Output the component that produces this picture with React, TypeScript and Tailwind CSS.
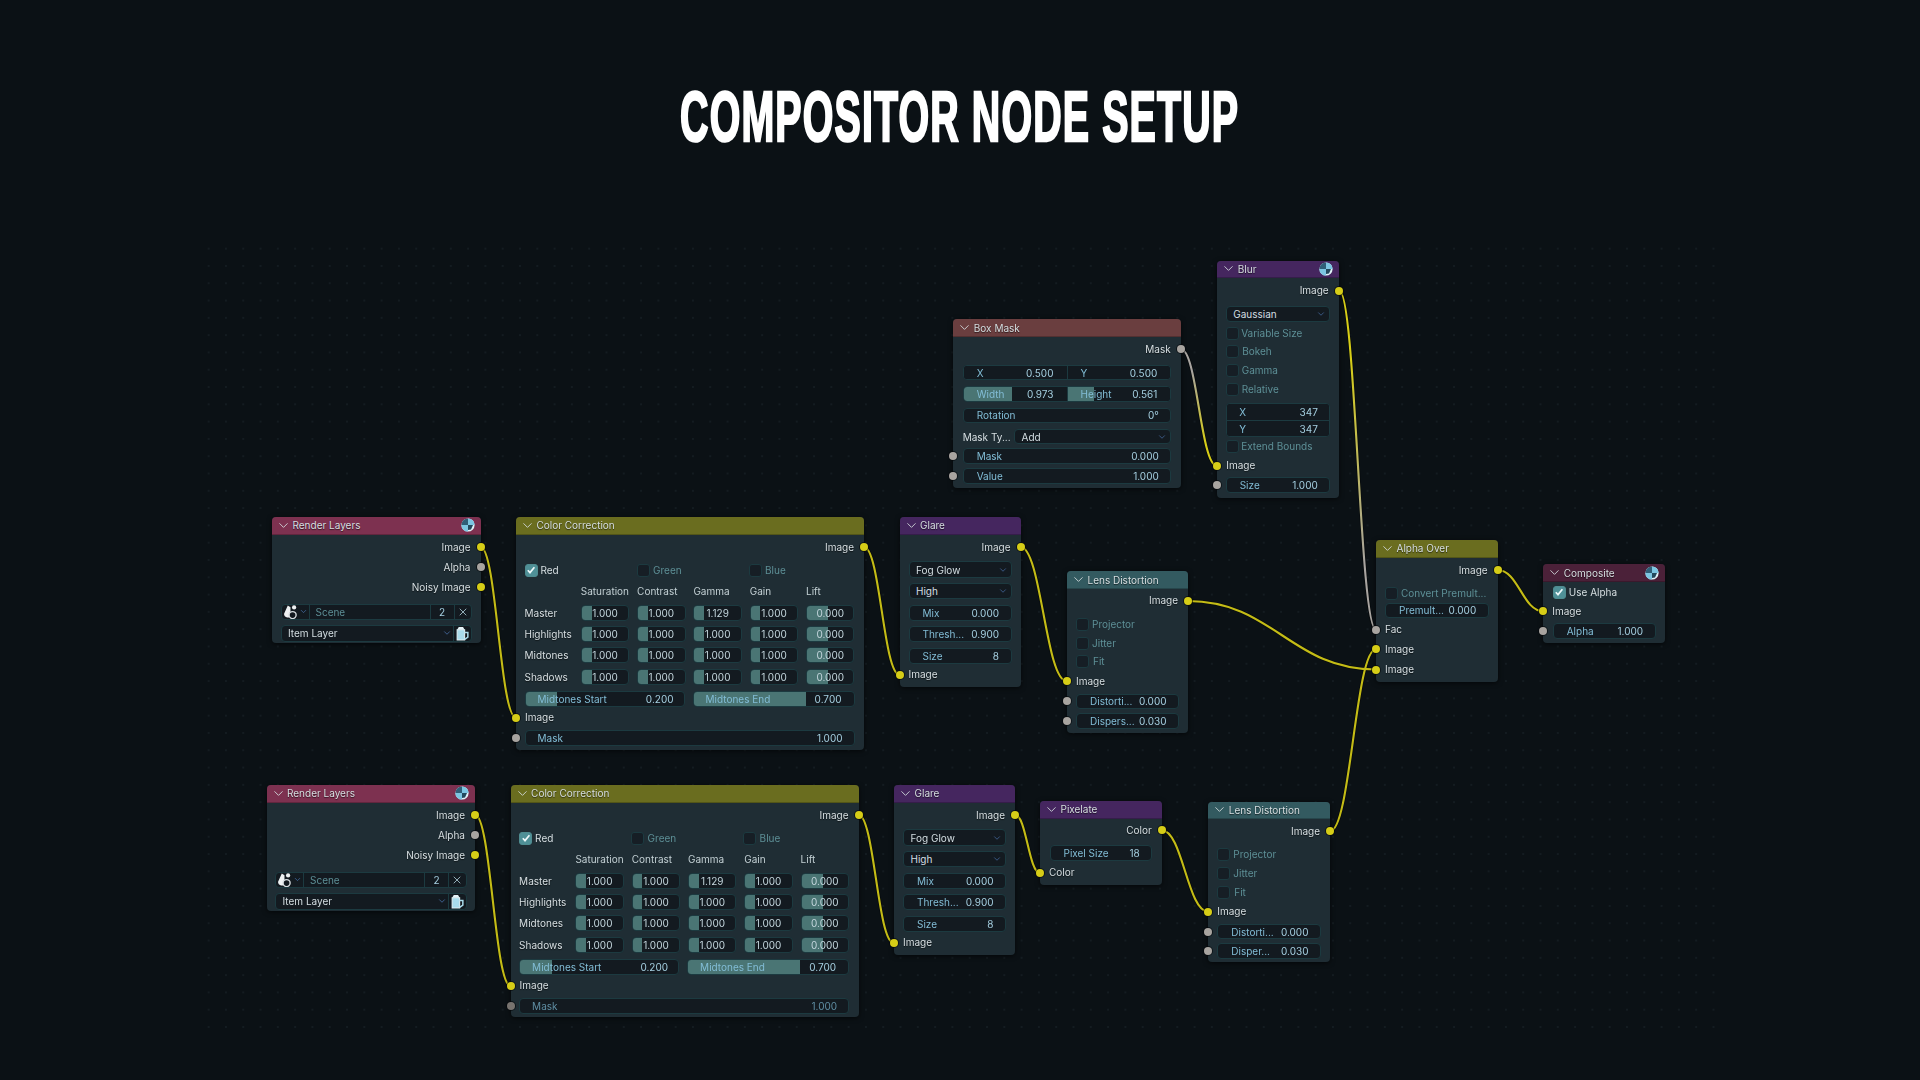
import type { ReactNode } from "react"
import { ChevronDown, X } from "lucide-react"

const YELLOW = "#d6cd17"
const GRAY = "#a8a4a0"

type Wire = { x1: number; y1: number; x2: number; y2: number; from?: string; to?: string }

const wires: Wire[] = [
  { x1: 480.5, y1: 547, x2: 516, y2: 717.7 },
  { x1: 864, y1: 547, x2: 899.5, y2: 674.7 },
  { x1: 1020.5, y1: 547, x2: 1066.5, y2: 681 },
  { x1: 1188, y1: 601, x2: 1376, y2: 669.5 },
  { x1: 1181, y1: 349.3, x2: 1216.7, y2: 465.7, from: GRAY, to: YELLOW },
  { x1: 1339.3, y1: 290.7, x2: 1376, y2: 629.7, from: YELLOW, to: GRAY },
  { x1: 1497.7, y1: 570, x2: 1543.3, y2: 611.3 },
  { x1: 475, y1: 814.7, x2: 510.6, y2: 986 },
  { x1: 858.4, y1: 814.7, x2: 893.5, y2: 942.7 },
  { x1: 1015, y1: 814.7, x2: 1040, y2: 873 },
  { x1: 1161.7, y1: 830.3, x2: 1208.3, y2: 911.7 },
  { x1: 1330, y1: 831.3, x2: 1376, y2: 649.3 },
]

function wirePath(w: Wire) {
  const d = (w.x2 - w.x1) * 0.45
  return `M${w.x1} ${w.y1} C${w.x1 + d} ${w.y1}, ${w.x2 - d} ${w.y2}, ${w.x2} ${w.y2}`
}

function Wires() {
  return (
    <svg className="absolute inset-0" width={1920} height={1080} fill="none">
      <defs>
        {wires.map((w, i) =>
          w.from ? (
            <linearGradient key={i} id={`wire-${i}`} gradientUnits="userSpaceOnUse" x1={w.x1} y1={w.y1} x2={w.x2} y2={w.y2}>
              <stop offset="0.2" stopColor={w.from} />
              <stop offset="0.8" stopColor={w.to} />
            </linearGradient>
          ) : null,
        )}
      </defs>
      {wires.map((w, i) => (
        <path key={i} d={wirePath(w)} stroke="#05080a" strokeWidth={3.6} opacity={0.7} />
      ))}
      {wires.map((w, i) => (
        <path key={i} d={wirePath(w)} stroke={w.from ? `url(#wire-${i})` : "#c4bc16"} strokeWidth={2.1} />
      ))}
    </svg>
  )
}

function RenderIcon() {
  return (
    <svg width="14" height="14" viewBox="0 0 14 14">
      <circle cx="7" cy="7" r="6.6" fill="#dff3f8" />
      <path d="M7 7V.4a6.6 6.6 0 0 1 6.6 6.6z" fill="#7cc6e2" />
      <path d="M7 7v6.6A6.6 6.6 0 0 1 .4 7z" fill="#7cc6e2" />
      <path d="M7 7H.4A6.6 6.6 0 0 1 7 .4z" fill="#2f5f78" />
      <path d="M7 7h5l-2 4.5-3 .5z" fill="#234a5e" />
    </svg>
  )
}

function SceneIcon() {
  return (
    <svg width="16" height="16" viewBox="0 0 15 15">
      <path d="M4.5 1.5 1 9.2A3 3 0 0 0 4 12.6h3V3z" fill="#eef1f2" />
      <circle cx="10.4" cy="3.2" r="2" fill="#eef1f2" />
      <circle cx="9" cy="10.4" r="3.3" fill="#12181e" stroke="#d6dcdf" strokeWidth="1.3" />
    </svg>
  )
}

function CopyIcon() {
  return (
    <svg width="15" height="15" viewBox="0 0 13 14" fill="none">
      <path d="M1.5 3.5h7v9.5h-7z" fill="#a9dcec" stroke="#dff1f6" strokeWidth="1" />
      <path d="M3 1h4l1.5 2.5h-7z" fill="#e6f3f7" />
      <path d="M8.5 6h3v4.4L8.5 12.4" stroke="#a9dcec" strokeWidth="1.4" />
    </svg>
  )
}

function Socket({ side, color = "y", dim = false }: { side: "l" | "r"; color?: "y" | "g"; dim?: boolean }) {
  return (
    <span
      className={`absolute top-1/2 -translate-y-1/2 w-[8px] h-[8px] rounded-full shadow-[0_0_0_1px_rgba(5,8,10,0.65)] ${
        side === "l" ? "left-[-4px]" : "right-[-4px]"
      } ${color === "y" ? "bg-[#d6cd17]" : dim ? "bg-[#77736f]" : "bg-[#a8a4a0]"}`}
    />
  )
}

function Node({
  title,
  pos,
  head,
  icon = false,
  children,
}: {
  title: string
  pos: string
  head: string
  icon?: boolean
  children: ReactNode
}) {
  return (
    <div className={`absolute flex flex-col rounded-[4px] bg-[#1f2d34] shadow-[0_1px_5px_rgba(0,0,0,0.65)] ${pos}`}>
      <div className={`flex h-[17.5px] shrink-0 items-center gap-[1.5px] rounded-t-[4px] pb-[1px] pl-[4px] pr-[6px] shadow-[inset_0_-1px_0_rgba(0,0,0,0.22)] ${head}`}>
        <ChevronDown size={15} strokeWidth={1.4} className="text-[#d4dcde]" />
        <span className="flex-1 text-[#d6dee0] [text-shadow:0_1px_1px_rgba(0,0,0,0.6)]">{title}</span>
        {icon && <RenderIcon />}
      </div>
      {children}
    </div>
  )
}

// socket label on its own row, output sockets sit on the right edge
function Out({ label, cls, color = "y" }: { label: string; cls: string; color?: "y" | "g" }) {
  return (
    <div className={`relative flex items-center justify-end pr-[10px] text-[#d7dfe2] [text-shadow:0_1px_1px_rgba(0,0,0,0.6)] ${cls}`}>
      <span className="mb-[1px]">{label}</span>
      <Socket side="r" color={color} />
    </div>
  )
}

function In({ label, cls, color = "y" }: { label: string; cls: string; color?: "y" | "g" }) {
  return (
    <div className={`relative flex items-center pl-[9px] text-[#d7dfe2] [text-shadow:0_1px_1px_rgba(0,0,0,0.6)] ${cls}`}>
      <span className="mb-[1px]">{label}</span>
      <Socket side="l" color={color} />
    </div>
  )
}

// bordered dark field, fill is the slider part in percent
function Field({
  label,
  value,
  fill = 0,
  cls = "pl-[13px] pr-[11.5px]",
  dim = false,
}: {
  label?: string
  value?: string
  fill?: number
  cls?: string
  dim?: boolean
}) {
  return (
    <div className={`relative flex min-w-0 flex-1 items-center justify-between overflow-hidden rounded-[4px] border border-[#1c3a40] bg-[#131a20] ${cls}`}>
      {fill > 0 && <span className="absolute inset-y-0 left-0 bg-[#4a7574]" style={{ width: `${fill}%` }} />}
      {label && <span className={`relative ${dim ? "text-[#5f8ea3]" : "text-[#82bdd6]"}`}>{label}</span>}
      {value && <span className={`relative ${dim ? "text-[#5f8ea3]" : "text-[#a5cfe0]"}`}>{value}</span>}
    </div>
  )
}

function Dropdown({ label, cls = "" }: { label: string; cls?: string }) {
  return (
    <div className={`flex flex-1 items-center justify-between rounded-[4px] border border-[#1c3a40] bg-[#131a20] pl-[6.5px] pr-[3px] text-[#d4dee2] ${cls}`}>
      {label}
      <ChevronDown size={10} strokeWidth={1.6} className="text-[#4b74b0]" />
    </div>
  )
}

function Check({ label, cls, on = false, gap = "gap-[3px]" }: { label: string; cls: string; on?: boolean; gap?: string }) {
  return (
    <div className={`flex items-center ${gap} ${cls}`}>
      <span className={`flex h-[13px] w-[13px] shrink-0 items-center justify-center rounded-[3px] border ${on ? "border-[#4f8c90] bg-[#4f9097]" : "border-[#1c3a40] bg-[#161e25]"}`}>
        {on && (
          <svg width="10" height="10" viewBox="0 0 10 10" fill="none">
            <path d="M1.8 5.2 4 7.6 8.4 2.2" stroke="#eef8fa" strokeWidth="1.7" />
          </svg>
        )}
      </span>
      <span className={`mb-[1px] ${on ? "text-[#d7dfe2]" : "text-[#5d8f96]"}`}>{label}</span>
    </div>
  )
}

function RenderLayers({ pos }: { pos: string }) {
  return (
    <Node title="Render Layers" pos={pos} head="bg-[#7d3150]" icon>
      <Out label="Image" cls="mt-[2.5px] h-[20px]" />
      <Out label="Alpha" cls="h-[20px]" color="g" />
      <Out label="Noisy Image" cls="h-[20px]" />
      <div className="mt-[6.5px] flex h-[16.5px] mx-[8.5px] overflow-hidden rounded-[4px] border border-[#1c3a40] bg-[#131a20]">
        <span className="flex w-[28px] items-center justify-center border-r border-[#1c3a40]">
          <SceneIcon />
          <ChevronDown size={9} strokeWidth={1.8} className="text-[#4b74b0]" />
        </span>
        <span className="flex w-[121px] items-center border-r border-[#1c3a40] pl-[6px] text-[#5d8f96]">Scene</span>
        <span className="flex w-[24px] items-center justify-center border-r border-[#1c3a40] text-[#a5cfe0]">2</span>
        <span className="flex flex-1 items-center justify-center">
          <X size={12} strokeWidth={1.6} className="text-[#b4d2dd]" />
        </span>
      </div>
      <div className="mt-[5px] flex h-[16.5px] mx-[8.5px] overflow-hidden rounded-[4px] border border-[#1c3a40] bg-[#131a20]">
        <span className="flex flex-1 items-center justify-between border-r border-[#1c3a40] pl-[6.5px] pr-[1px] text-[#d4dee2]">
          Item Layer
          <ChevronDown size={10} strokeWidth={1.8} className="text-[#4b74b0]" />
        </span>
        <span className="flex w-[17px] items-center justify-center">
          <CopyIcon />
        </span>
      </div>
    </Node>
  )
}

const grades = [
  { name: "Master", gamma: "1.129" },
  { name: "Highlights", gamma: "1.000" },
  { name: "Midtones", gamma: "1.000" },
  { name: "Shadows", gamma: "1.000" },
]

function Knob({ value, fill = 21 }: { value: string; fill?: number }) {
  return (
    <div className="relative flex h-[16px] items-center justify-center overflow-hidden rounded-[4px] border border-[#1c3a40] bg-[#131a20] text-[#c3d5dc]">
      <span className="absolute inset-y-0 left-0 bg-[#4a7574]" style={{ width: `${fill}%` }} />
      <span className="relative">{value}</span>
    </div>
  )
}

function ColorCorrection({ pos, dimMask = false }: { pos: string; dimMask?: boolean }) {
  return (
    <Node title="Color Correction" pos={pos} head="bg-[#6a6d1f]">
      <Out label="Image" cls="mt-[2.5px] h-[20px]" />
      <div className="mt-[3px] grid h-[20px] grid-cols-[112px_112px_1fr] pl-[8.5px]">
        <Check label="Red" cls="" on />
        <Check label="Green" cls="" gap="gap-[3.5px]" />
        <Check label="Blue" cls="" gap="gap-[3.5px]" />
      </div>
      <div className="mt-[3.7px] grid h-[14px] grid-cols-[48.5px_repeat(5,48.5px)] items-center gap-x-[7.8px] pl-[8.5px] text-[#c3d0d4]">
        <span />
        <span>Saturation</span>
        <span>Contrast</span>
        <span>Gamma</span>
        <span>Gain</span>
        <span>Lift</span>
      </div>
      <div className="mt-[7px] grid grid-cols-[48.5px_repeat(5,48.5px)] items-center gap-x-[7.8px] gap-y-[5.3px] pl-[8.5px]">
        {grades.map((g) => (
          <div key={g.name} className="contents">
            <span className="whitespace-nowrap text-[#d7dfe2] [text-shadow:0_1px_1px_rgba(0,0,0,0.6)]">{g.name}</span>
            <Knob value="1.000" />
            <Knob value="1.000" />
            <Knob value={g.gamma} />
            <Knob value="1.000" />
            <Knob value="0.000" fill={46} />
          </div>
        ))}
      </div>
      <div className="mt-[6px] flex h-[16px] gap-[8px] pl-[8.5px] pr-[9.5px]">
        <Field label="Midtones Start" value="0.200" fill={20} cls="pl-[12px] pr-[10px]" />
        <Field label="Midtones End" value="0.700" fill={70} cls="pl-[12px] pr-[12px]" />
      </div>
      <In label="Image" cls="mt-[3px] h-[16px]" />
      <div className="relative mt-[4.3px] flex h-[16px] pl-[8.5px] pr-[9.5px]">
        <Field label="Mask" value="1.000" cls="pl-[12px] pr-[11px]" dim={dimMask} />
        <Socket side="l" color="g" dim={dimMask} />
      </div>
    </Node>
  )
}

function Glare({ pos }: { pos: string }) {
  return (
    <Node title="Glare" pos={pos} head="bg-[#45265f]">
      <Out label="Image" cls="mt-[2.5px] h-[20px]" />
      <div className="mx-[9px] mt-[4.3px] flex h-[16.5px]">
        <Dropdown label="Fog Glow" />
      </div>
      <div className="mx-[9px] mt-[5.5px] flex h-[16px]">
        <Dropdown label="High" />
      </div>
      <div className="mx-[9px] mt-[5.3px] flex h-[16px]">
        <Field label="Mix" value="0.000" />
      </div>
      <div className="mx-[9px] mt-[5.3px] flex h-[16px]">
        <Field label="Thresh..." value="0.900" />
      </div>
      <div className="mx-[9px] mt-[5.7px] flex h-[16px]">
        <Field label="Size" value="8" />
      </div>
      <In label="Image" cls="mt-[3px] h-[16px]" />
    </Node>
  )
}

function LensDistortion({ pos, second }: { pos: string; second: string }) {
  return (
    <Node title="Lens Distortion" pos={pos} head="bg-[#335a60]">
      <Out label="Image" cls="mt-[2px] h-[20px]" />
      <Check label="Projector" cls="mt-[5.4px] h-[16px] pl-[9px]" />
      <Check label="Jitter" cls="mt-[3.3px] h-[16px] pl-[9px]" />
      <Check label="Fit" cls="mt-[2.3px] h-[16px] pl-[9px]" gap="gap-[4px]" />
      <In label="Image" cls="mt-[3.4px] h-[16px]" />
      <div className="relative mx-[9px] mt-[4.3px] flex h-[15.5px]">
        <Field label="Distorti..." value="0.000" />
        <span className="absolute -left-[9px] top-0 h-full">
          <Socket side="l" color="g" />
        </span>
      </div>
      <div className="relative mx-[9px] mt-[3.8px] flex h-[15.7px]">
        <Field label={second} value="0.030" />
        <span className="absolute -left-[9px] top-0 h-full">
          <Socket side="l" color="g" />
        </span>
      </div>
    </Node>
  )
}

function BoxMask() {
  return (
    <Node title="Box Mask" pos="left-[953.3px] top-[319.3px] w-[227.4px] h-[168.7px]" head="bg-[#6a3e3f]">
      <Out label="Mask" cls="mt-[2.5px] h-[20px]" color="g" />
      <div className="mx-[9.4px] mt-[5.7px] flex h-[15.5px] overflow-hidden rounded-[4px] border border-[#1c3a40] bg-[#131a20]">
        <Field label="X" value="0.500" cls="rounded-none border-0 border-r pl-[13px] pr-[13px]" />
        <Field label="Y" value="0.500" cls="rounded-none border-0 pl-[13px] pr-[13px]" />
      </div>
      <div className="mx-[9.4px] mt-[5.5px] flex h-[15.7px] overflow-hidden rounded-[4px] border border-[#1c3a40] bg-[#131a20]">
        <Field label="Width" value="0.973" fill={47} cls="rounded-none border-0 border-r pl-[13px] pr-[13px]" />
        <Field label="Height" value="0.561" fill={26} cls="rounded-none border-0 pl-[13px] pr-[13px]" />
      </div>
      <div className="mx-[9.4px] mt-[6px] flex h-[15.6px]">
        <Field label="Rotation" value="0°" />
      </div>
      <div className="mx-[9.4px] mt-[5.7px] flex h-[15.5px] items-center">
        <span className="w-[51.3px] shrink-0 whitespace-nowrap text-[#d7dfe2]">Mask Ty...</span>
        <Dropdown label="Add" cls="h-full" />
      </div>
      <div className="relative mx-[9.4px] mt-[3.8px] flex h-[15.5px]">
        <Field label="Mask" value="0.000" />
        <span className="absolute -left-[9.4px] top-0 h-full">
          <Socket side="l" color="g" />
        </span>
      </div>
      <div className="relative mx-[9.4px] mt-[4.5px] flex h-[16px]">
        <Field label="Value" value="1.000" />
        <span className="absolute -left-[9.4px] top-0 h-full">
          <Socket side="l" color="g" />
        </span>
      </div>
    </Node>
  )
}

function Blur() {
  return (
    <Node title="Blur" pos="left-[1217.3px] top-[260.7px] w-[121.4px] h-[237.6px]" head="bg-[#45265f]" icon>
      <Out label="Image" cls="mt-[2.5px] h-[20px]" />
      <div className="mx-[8.4px] mt-[5px] flex h-[16px]">
        <Dropdown label="Gaussian" />
      </div>
      <Check label="Variable Size" cls="mt-[3.6px] h-[16px] pl-[8.4px]" gap="gap-[2.5px]" />
      <Check label="Bokeh" cls="mt-[2.4px] h-[16px] pl-[8.4px]" gap="gap-[3.5px]" />
      <Check label="Gamma" cls="mt-[3px] h-[16px] pl-[8.4px]" gap="gap-[3px]" />
      <Check label="Relative" cls="mt-[3.3px] h-[16px] pl-[8.4px]" gap="gap-[3px]" />
      <div className="mx-[8.4px] mt-[5.3px] flex h-[34px] flex-col overflow-hidden rounded-[4px] border border-[#1c3a40] bg-[#131a20]">
        <Field label="X" value="347" cls="rounded-none border-0 border-b pl-[12.5px] pr-[11.5px]" />
        <Field label="Y" value="347" cls="rounded-none border-0 pl-[12.5px] pr-[11.5px]" />
      </div>
      <Check label="Extend Bounds" cls="mt-[1.4px] h-[16px] pl-[8.4px]" gap="gap-[2.5px]" />
      <In label="Image" cls="mt-[3px] h-[16px]" />
      <div className="relative mx-[8.4px] mt-[3.6px] flex h-[16px]">
        <Field label="Size" value="1.000" />
        <span className="absolute -left-[8.4px] top-0 h-full">
          <Socket side="l" color="g" />
        </span>
      </div>
    </Node>
  )
}

function AlphaOver() {
  return (
    <Node title="Alpha Over" pos="left-[1376px] top-[540px] w-[121.7px] h-[141.7px]" head="bg-[#6a6d1f]">
      <Out label="Image" cls="mt-[2.5px] h-[20px]" />
      <Check label="Convert Premult..." cls="mt-[5.3px] h-[16px] whitespace-nowrap pl-[9px]" />
      <div className="mx-[9px] mt-[1.4px] flex h-[15.6px]">
        <Field label="Premult..." value="0.000" />
      </div>
      <In label="Fac" cls="mt-[3.4px] h-[16px]" color="g" />
      <In label="Image" cls="mt-[3.6px] h-[16px]" />
      <In label="Image" cls="mt-[4.4px] h-[16px]" />
    </Node>
  )
}

function Composite() {
  return (
    <Node title="Composite" pos="left-[1543.3px] top-[564.3px] w-[121.7px] h-[79px]" head="bg-[#4b2139]" icon>
      <Check label="Use Alpha" cls="mt-[2.5px] h-[16px] pl-[9.5px]" on />
      <In label="Image" cls="mt-[3px] h-[16px]" />
      <div className="relative mx-[9.4px] mt-[4px] flex h-[15.4px]">
        <Field label="Alpha" value="1.000" />
        <span className="absolute -left-[9.4px] top-0 h-full">
          <Socket side="l" color="g" />
        </span>
      </div>
    </Node>
  )
}

function Pixelate() {
  return (
    <Node title="Pixelate" pos="left-[1040px] top-[801px] w-[121.7px] h-[84.3px]" head="bg-[#45265f]">
      <Out label="Color" cls="mt-[1.8px] h-[20px]" />
      <div className="mx-[9.5px] mt-[4.7px] flex h-[16px]">
        <Field label="Pixel Size" value="18" />
      </div>
      <In label="Color" cls="mt-[4px] h-[16px]" />
    </Node>
  )
}

export default function App() {
  return (
    <div className="relative h-[1080px] w-[1920px] overflow-hidden bg-[#0b1115] font-['Inter',sans-serif] text-[10px] leading-none">
      <div className="absolute bottom-[40px] left-[200px] right-[200px] top-[240px] bg-[radial-gradient(circle,#141c21_0.8px,transparent_1.1px)] bg-[size:17.3px_17.3px]" />

      <h1 className="relative flex justify-center pt-[83px]">
        <span className="origin-center scale-x-[0.555] whitespace-nowrap font-['Liberation_Sans_Narrow','Liberation_Sans',sans-serif] text-[71px] font-bold leading-[68px] tracking-[2px] text-white [-webkit-text-stroke:2.5px_white]">
          COMPOSITOR NODE SETUP
        </span>
      </h1>

      <div className="absolute inset-0 blur-[0.4px]">
        <Wires />
        <RenderLayers pos="left-[272px] top-[517px] w-[208.5px] h-[126px]" />
        <ColorCorrection pos="left-[516px] top-[517px] w-[348px] h-[233px]" />
        <Glare pos="left-[899.5px] top-[517px] w-[121px] h-[170px]" />
        <LensDistortion pos="left-[1067px] top-[571.4px] w-[121px] h-[161.6px]" second="Dispers..." />
        <BoxMask />
        <Blur />
        <AlphaOver />
        <Composite />
        <RenderLayers pos="left-[266.5px] top-[785px] w-[208.5px] h-[126px]" />
        <ColorCorrection pos="left-[510.6px] top-[785px] w-[348px] h-[232px]" dimMask />
        <Glare pos="left-[894px] top-[785px] w-[121px] h-[170px]" />
        <Pixelate />
        <LensDistortion pos="left-[1208.3px] top-[801.7px] w-[121.7px] h-[160.6px]" second="Disper..." />
      </div>
    </div>
  )
}
